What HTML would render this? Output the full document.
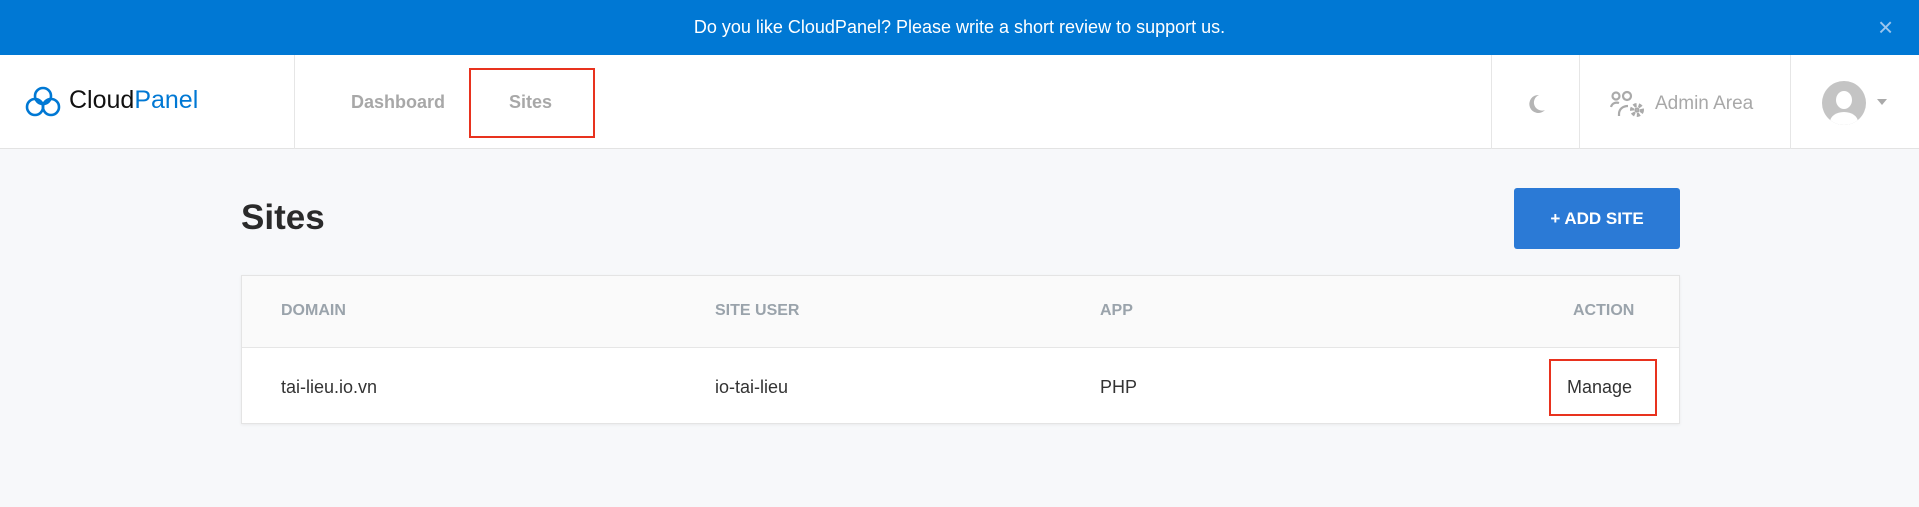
<!DOCTYPE html>
<html><head><style>
*{margin:0;padding:0;box-sizing:border-box}
body{width:1919px;height:507px;background:#f7f8fa;font-family:"Liberation Sans",sans-serif;position:relative;overflow:hidden}
.a{position:absolute}
.banner{left:0;top:0;width:1919px;height:55px;background:#0078d4;color:#fff;font-size:18px;text-align:center;line-height:55px}
.hdr{left:0;top:55px;width:1919px;height:94px;background:#fff;border-bottom:1px solid #e3e3e3}
.vl{top:55px;width:1px;height:94px;background:#e6e6e6}
.nav{font-size:18px;font-weight:bold;color:#a8a8a8;top:92px}
.th{font-size:16px;font-weight:bold;color:#9aa3ab;top:302px}
.td{font-size:18px;color:#333;top:377px}
</style></head><body>
<div class="a banner">Do you like CloudPanel? Please write a short review to support us.</div>
<div class="a" style="left:1878px;top:14px;color:#9cc6ee;font-size:26px;line-height:26px">×</div>
<div class="a hdr"></div>
<svg class="a" style="left:25px;top:85px" width="36" height="34" viewBox="0 0 36 34" fill="none" stroke="#0078d4" stroke-width="2.6"><circle cx="18" cy="11" r="8"/><circle cx="10" cy="22" r="8"/><circle cx="26" cy="22" r="8"/></svg>
<div class="a" style="left:69px;top:86px;font-size:25px;color:#111">Cloud<span style="color:#0078d4">Panel</span></div>
<div class="a vl" style="left:294px"></div>
<div class="a nav" style="left:351px">Dashboard</div>
<div class="a nav" style="left:509px">Sites</div>
<div class="a" style="left:469px;top:68px;width:126px;height:70px;border:2px solid #e8321e"></div>
<div class="a vl" style="left:1491px"></div>
<div class="a vl" style="left:1579px"></div>
<div class="a vl" style="left:1790px"></div>
<svg class="a" style="left:1525px;top:93px" width="22" height="22" viewBox="0 0 22 22"><path d="M14 2A9 9 0 1 0 20 17A8 8 0 0 1 14 2Z" fill="#b5b5b5"/></svg>
<svg class="a" style="left:1610px;top:90px" width="36" height="28" viewBox="0 0 36 28" fill="none" stroke="#aaa" stroke-width="2.2"><circle cx="6" cy="6" r="3.5"/><circle cx="17" cy="6" r="4"/><path d="M1 17c1-4 5-5 8-4"/><path d="M9 26v-2c0-5 4-8 9-8"/><circle cx="27" cy="20" r="5" stroke-dasharray="3 2" stroke-width="4"/><circle cx="27" cy="20" r="1.5"/></svg>
<div class="a" style="left:1655px;top:93px;font-size:19px;color:#a8a8a8">Admin Area</div>
<div class="a" style="left:1822px;top:81px;width:44px;height:44px;border-radius:50%;background:#c4c4c4;overflow:hidden"><div class="a" style="left:14px;top:10px;width:16px;height:18px;border-radius:50%;background:#fff"></div><div class="a" style="left:8px;top:31px;width:28px;height:20px;border-radius:50%;background:#fff"></div></div>
<div class="a" style="left:1877px;top:99px;border-left:5px solid transparent;border-right:5px solid transparent;border-top:6px solid #aaa"></div>
<div class="a" style="left:241px;top:198px;font-size:35px;font-weight:bold;color:#2a2a2a">Sites</div>
<div class="a" style="left:1514px;top:188px;width:166px;height:61px;background:#2b7ad6;border-radius:3px;color:#fff;font-size:17px;font-weight:bold;text-align:center;line-height:61px">+ ADD SITE</div>
<div class="a" style="left:241px;top:275px;width:1439px;height:149px;background:#fff;border:1px solid #e4e4e4;box-shadow:0 1px 3px rgba(0,0,0,.06)"></div>
<div class="a" style="left:242px;top:276px;width:1437px;height:72px;background:#fafafa;border-bottom:1px solid #e6e6e6"></div>
<div class="a th" style="left:281px">DOMAIN</div>
<div class="a th" style="left:715px">SITE USER</div>
<div class="a th" style="left:1100px">APP</div>
<div class="a th" style="left:1573px">ACTION</div>
<div class="a td" style="left:281px">tai-lieu.io.vn</div>
<div class="a td" style="left:715px">io-tai-lieu</div>
<div class="a td" style="left:1100px">PHP</div>
<div class="a td" style="left:1567px">Manage</div>
<div class="a" style="left:1549px;top:359px;width:108px;height:57px;border:2px solid #e8321e"></div>
</body></html>
